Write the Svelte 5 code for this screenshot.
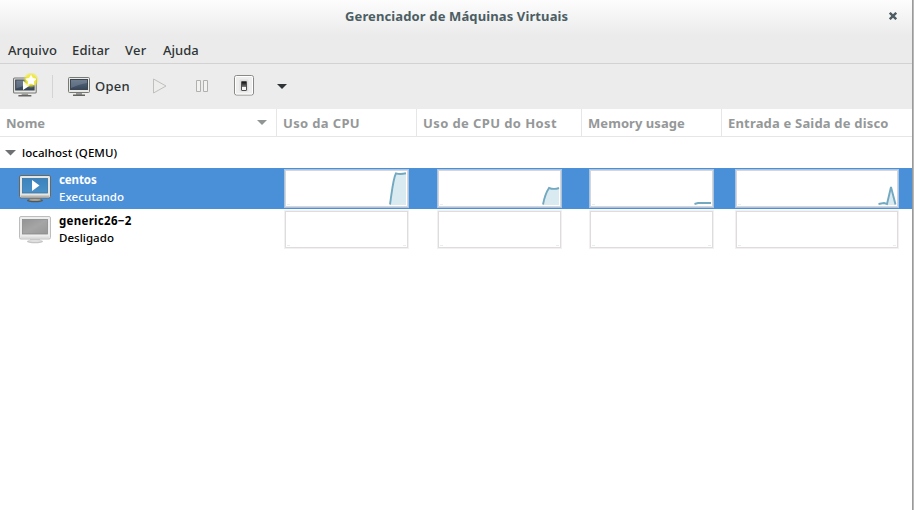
<script>
  const menus = [
    { label: 'Arquivo', w: 64, ls: 0.1 },
    { label: 'Editar', w: 53, ls: 0.15 },
    { label: 'Ver', w: 38, ls: 0.3 },
    { label: 'Ajuda', w: 50, ls: 0 }
  ];
  const columns = [
    { label: 'Nome', w: 277, sorted: true, ls: 0 },
    { label: 'Uso da CPU', w: 140, ls: 0.35 },
    { label: 'Uso de CPU do Host', w: 165, ls: 0.4 },
    { label: 'Memory usage', w: 140, ls: 0.06 },
    { label: 'Entrada e Saida de disco', w: 190, ls: 0.18 }
  ];
  const graphs = [
    { w: 125, gap: 28 },
    { w: 125, gap: 27 },
    { w: 125, gap: 21 },
    { w: 164, gap: 0 }
  ];
  const lines = [
    'M106 35.5C108 22 109 10 112 4.3Q116 5.6 122 4.3',
    'M106 35.5Q108 25 112 19Q117 20.8 122 19',
    'M105.5 35L109 34H122',
    'M143.5 35L149 34L152 35L156 18L160.5 35.5'
  ];
  const fills = [
    'M106 36C108 22 109 10 112 4.3Q116 5.6 122 4.3V36Z',
    'M106 36Q108 25 112 19Q117 20.8 122 19V36Z',
    '',
    'M151.5 36L156 18L161 36Z'
  ];
  const machines = [
    { name: 'centos', state: 'Executando', running: true, nls: -0.1, sls: 0.1 },
    { name: 'generic26−2', state: 'Desligado', running: false, nls: 0.3, sls: 0.03 }
  ];
</script>

{#snippet toolMonitor()}
  <rect x=".5" y="1.5" width="21" height="15" rx="1" fill="#e8e8e5" stroke="#777973" />
  <rect x="2.5" y="3.5" width="17" height="10" fill="url(#screen)" stroke="#3d4650" />
  <path d="M3 4H19V7Q12 8 3 12Z" fill="#8d9bab" opacity=".4" />
  <path d="M8 17H14V19H8Z" fill="#999" />
  <path d="M5 18.5H17V20H5Z" fill="#62645f" />
{/snippet}

<div class="window">
  <header class="titlebar">
    <h1>Gerenciador de Máquinas Virtuais</h1>
    <svg class="close" width="8" height="8" viewBox="0 0 8 8"><path d="M.8 .8L7.2 7.2M7.2 .8L.8 7.2" stroke="#4c5d63" stroke-width="2.4" /></svg>
  </header>

  <nav class="menubar">
    {#each menus as m}
      <span style="width:{m.w}px;letter-spacing:{m.ls}px">{m.label}</span>
    {/each}
  </nav>

  <div class="toolbar">
    <svg class="new" width="26" height="26" viewBox="0 0 26 26">
      <defs>
        <linearGradient id="screen" x1="0" y1="0" x2="0" y2="1"><stop offset="0" stop-color="#5d6d80" /><stop offset="1" stop-color="#35455b" /></linearGradient>
        <radialGradient id="glow"><stop offset="0" stop-color="#fffb70" /><stop offset=".6" stop-color="#f0e832" stop-opacity=".95" /><stop offset="1" stop-color="#f0e832" stop-opacity="0" /></radialGradient>
      </defs>
      <g transform="translate(0 3.5) scale(1.08 1)">{@render toolMonitor()}</g>
      <path d="M10 8L17 12.5L10 17Z" fill="#fff" />
      <circle cx="18" cy="7" r="8" fill="url(#glow)" />
      <path d="M18 1.5L19.8 5.1L23.7 5.7L20.9 8.4L21.5 12.3L18 10.5L14.5 12.3L15.1 8.4L12.3 5.7L16.2 5.1Z" fill="#fff" />
    </svg>
    <i class="divider"></i>
    <svg class="open-icon" width="22" height="22" viewBox="0 0 22 22">{@render toolMonitor()}</svg>
    <span class="open">Open</span>
    <svg class="play" width="16" height="18" viewBox="0 0 16 18"><path d="M1.5 2L14 9L1.5 16Z" fill="#ededeb" stroke="#bfbfbd" /></svg>
    <svg class="pause" width="14" height="14" viewBox="0 0 14 14"><path d="M1.5 1.5H5.5V12.5H1.5ZM8.5 1.5H12.5V12.5H8.5Z" fill="#f2f2f0" stroke="#b0b0ae" /></svg>
    <svg class="power" width="20" height="21" viewBox="0 0 20 21">
      <defs><linearGradient id="rocker" x1="0" y1="0" x2="0" y2="1"><stop offset="0" stop-color="#050505" /><stop offset=".5" stop-color="#666" /><stop offset="1" stop-color="#e8e8e8" /></linearGradient></defs>
      <rect x=".5" y=".5" width="19" height="19.5" rx="2" fill="#eee" stroke="#888a85" />
      <rect x="1.5" y="1.5" width="17" height="17.5" rx="1" fill="none" stroke="#fff" />
      <rect x="5.5" y="4.5" width="9" height="12" rx="1" fill="#ddd" />
      <rect x="7.5" y="6.5" width="5" height="9" rx=".5" fill="url(#rocker)" stroke="#4d4d4d" />
      <rect x="8" y="12" width="4" height="3" fill="#f5f5f5" />
    </svg>
    <svg class="arrow" width="10" height="5" viewBox="0 0 10 5"><path d="M0 0H10L5 5Z" fill="#2e3436" /></svg>
  </div>

  <div class="heads">
    {#each columns as c}
      <div class="head" style="width:{c.w}px">
        <span style="letter-spacing:{c.ls}px">{c.label}</span>
        {#if c.sorted}<svg width="10" height="5" viewBox="0 0 10 5"><path d="M0 0H10L5 5Z" fill="#929595" /></svg>{/if}
      </div>
    {/each}
  </div>

  <div class="host">
    <svg width="11" height="6" viewBox="0 0 11 6"><path d="M0 0H11L5.5 5.5Z" fill="#6d7173" /></svg>
    <span>localhost (QEMU)</span>
  </div>

  {#each machines as vm}
    <div class="vm" class:selected={vm.running}>
      <svg class="monitor" width="32" height="28" viewBox="0 0 32 28">
        <defs>
          <linearGradient id="blue" x1="0" y1="0" x2="0" y2="1"><stop offset="0" stop-color="#3a83bd" /><stop offset="1" stop-color="#4a90c8" /></linearGradient>
          <linearGradient id="gray" x1="0" y1="0" x2="1" y2="1"><stop offset="0" stop-color="#939393" /><stop offset=".5" stop-color="#a5a5a5" /><stop offset="1" stop-color="#979797" /></linearGradient>
        </defs>
        <ellipse cx="16" cy="25.5" rx="8" ry="1.8" fill={vm.running ? '#555753' : '#c4c4c4'} />
        <path d="M11 22H21V25H11Z" fill={vm.running ? '#888a85' : '#d2d2d2'} />
        <ellipse cx="16" cy="25" rx="6.5" ry=".8" fill={vm.running ? '#b4b5b2' : '#e8e8e8'} />
        <rect x=".5" y=".5" width="31" height="22.5" rx="1.5" fill={vm.running ? '#e5e5e2' : '#ededed'} stroke={vm.running ? '#666864' : '#bdbdbd'} />
        <path d="M1.5 20.5H30.5V22H1.5Z" fill={vm.running ? '#b7b8b5' : '#dedede'} />
        <rect x="3.5" y="3.5" width="25" height="14.5" fill={vm.running ? 'url(#blue)' : 'url(#gray)'} stroke={vm.running ? '#3973a3' : '#8b8b8b'} stroke-width=".8" />
        {#if vm.running}<path d="M13 5L20.5 10.5L13 16Z" fill="#fff" />{/if}
      </svg>
      <div class="label">
        <strong style="letter-spacing:{vm.nls}px">{vm.name}</strong>
        <span style="letter-spacing:{vm.sls}px">{vm.state}</span>
      </div>
      {#each graphs as g, i}
        <svg class="graph" width={g.w} height="39" viewBox="0 0 {g.w} 39" style="margin-right:{g.gap}px">
          <rect width={g.w} height="39" fill={vm.running ? '#a7c4e4' : '#f3f0f1'} />
          <rect x="1.5" y="1.5" width={g.w - 3} height="36" fill="#fff" stroke={vm.running ? '#d9d5d7' : '#e0dbdd'} />
          <path d="M3 35.5H6" stroke="#e4f0ef" />
          {#if vm.running}
            <path d={fills[i]} fill="#d9eaf0" />
            <path d={lines[i]} fill="none" stroke="#72a9c0" stroke-width="1.9" />
          {:else}
            <path d="M{g.w - 6} 35.5H{g.w - 3}" stroke="#e4f0ef" />
          {/if}
        </svg>
      {/each}
    </div>
  {/each}
</div>

<style>
  :global(body) { background: #b9b9b9; overflow: hidden; }
  .window {
    box-sizing: border-box; width: 913px; height: 510px; background: #fff;
    border-right: 1px solid #9a9a9a;
    font-family: "Noto Sans", "Open Sans", sans-serif; font-size: 13px; font-weight: 500; color: #2e3436;
    white-space: nowrap;
  }
  svg { display: block; flex: none; }
  .titlebar {
    height: 36px; display: flex; align-items: flex-start; padding-left: 345px;
    background: linear-gradient(#fdfdfd, #ebebeb);
  }
  h1 { margin: 6px 0 0; width: 543px; font-size: 13px; line-height: 20px; font-weight: 700; color: #4c5d63; letter-spacing: .12px; }
  .close { margin: 12px 0 0 1px; }
  .menubar {
    box-sizing: border-box; height: 28px; padding: 4px 0 0 8px; display: flex;
    background: #ebebeb; border-bottom: 1px solid #d2d2d2; line-height: 20px;
  }
  .menubar span, .open, .head span { display: block; flex: none; }
  .toolbar { height: 45px; display: flex; align-items: center; background: #ececec; }
  .new { margin: -2px 0 0 13px; }
  .divider { width: 1px; height: 23px; margin: 0 15px 0 13px; background: #d4d4d4; }
  .open-icon { margin-top: 1px; }
  .open { width: 57px; margin: -2px 0 0 5px; line-height: 20px; letter-spacing: .3px; }
  .play, .pause { margin-top: -2px; }
  .pause { margin-left: 27px; }
  .power { margin: -2px 0 0 25px; }
  .arrow { margin-left: 23px; }
  .heads { display: flex; height: 28px; box-sizing: border-box; border-bottom: 1px solid #e6e6e6; }
  .head {
    box-sizing: border-box; flex: none; display: flex; justify-content: space-between; align-items: center;
    padding: 0 9px 0 6px; border-right: 1px solid #e6e6e6; font-weight: 700; color: #959898;
  }
  .head:last-child { border-right: 0; }
  .host { height: 31px; display: flex; align-items: center; padding-left: 5px; color: #000; font-size: 11.5px; }
  .host span { margin-left: 6px; letter-spacing: .05px; }
  .vm { height: 41px; display: flex; align-items: flex-start; color: #000; font-size: 11.5px; }
  .selected { background: #4a90d9; color: #fff; }
  .monitor { margin: 7px 8px 0 19px; }
  .label { width: 225px; flex: none; display: flex; flex-direction: column; padding-top: 3px; line-height: 17px; }
  .graph { margin-top: 1px; }
</style>
